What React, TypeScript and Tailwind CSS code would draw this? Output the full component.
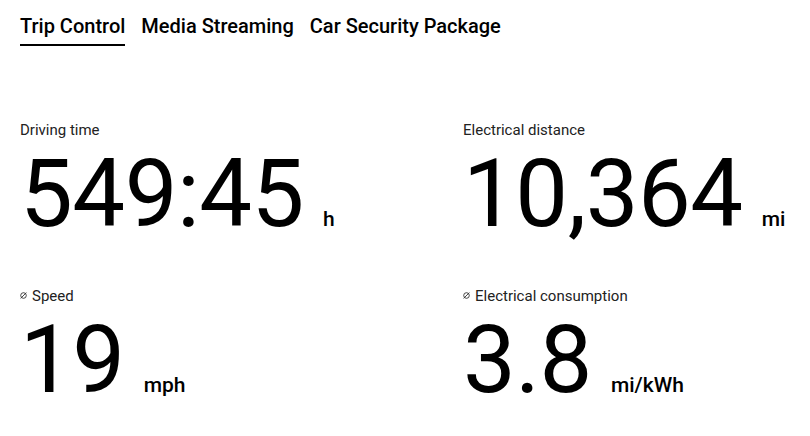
import React from "react";

function Avg() {
  return (
    <svg width="7" height="7" viewBox="0 0 7 7" className="mr-[5px] mb-[1px] inline-block">
      <circle cx="3.5" cy="3.5" r="2.8" fill="none" stroke="#333" strokeWidth="0.9" />
      <line x1="0.6" y1="6.4" x2="6.4" y2="0.6" stroke="#333" strokeWidth="0.9" />
    </svg>
  );
}

function Stat({ label, value, unit, avg }: { label: string; value: string; unit: string; avg?: boolean }) {
  return (
    <div className="flex flex-col">
      <div className="flex items-center h-5 text-[15px] leading-5 text-[#222]">
        {avg && <Avg />}
        <span>{label}</span>
      </div>
      <div className="flex items-baseline mt-[7px]">
        <span className="text-[94px] leading-[94px] font-normal tracking-[-0.5px] text-black">{value}</span>
        <span className="ml-[19px] text-[21px] font-medium text-black">{unit}</span>
      </div>
    </div>
  );
}

export default function App() {
  return (
    <div className="w-[810px] h-[436px] bg-white font-['Roboto',sans-serif] text-black overflow-hidden">
      <nav className="flex gap-4 px-5 pt-[14px]">
        <div className="text-[20px] leading-6 font-medium pb-[6px] border-b-2 border-black">Trip Control</div>
        <div className="text-[20px] leading-6 font-medium pb-[6px]">Media Streaming</div>
        <div className="text-[20px] leading-6 font-medium pb-[6px]">Car Security Package</div>
      </nav>
      <div className="grid grid-cols-[443px_1fr] px-5 mt-[74px] gap-y-[45px]">
        <Stat label="Driving time" value="549:45" unit="h" />
        <Stat label="Electrical distance" value="10,364" unit="mi" />
        <Stat label="Speed" value="19" unit="mph" avg />
        <Stat label="Electrical consumption" value="3.8" unit="mi/kWh" avg />
      </div>
    </div>
  );
}
